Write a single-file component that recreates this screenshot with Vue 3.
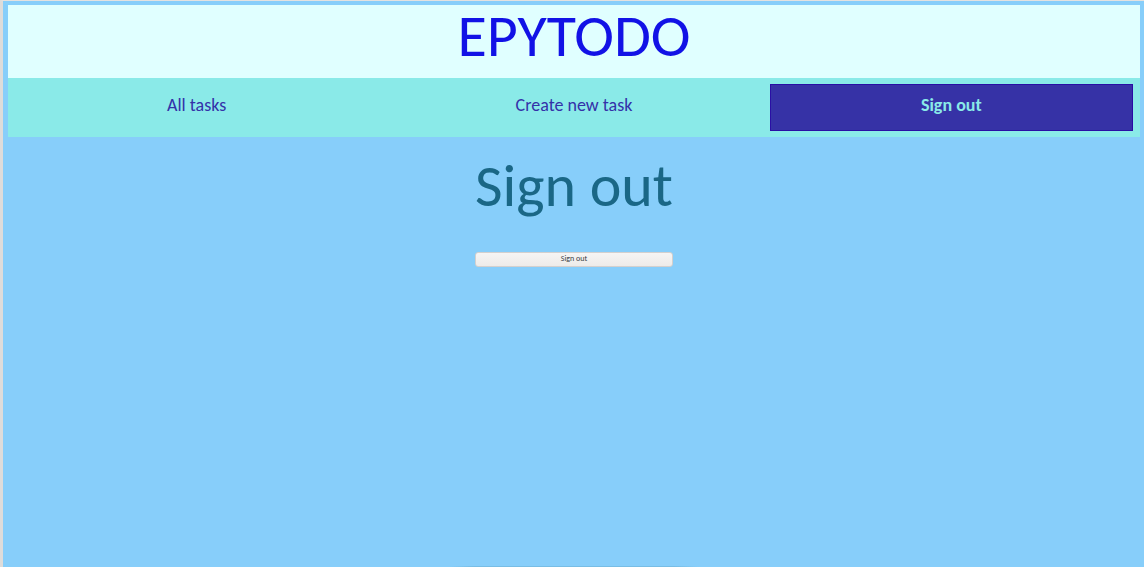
<script setup>
const links = [
  { label: 'All tasks', active: false },
  { label: 'Create new task', active: false },
  { label: 'Sign out', active: true },
]
</script>

<template>
  <div class="page">
    <header class="banner"><h1>EPYTODO</h1></header>
    <nav class="menu">
      <a v-for="link in links" :key="link.label" href="#" :class="{ active: link.active }">{{ link.label }}</a>
    </nav>
    <main class="content">
      <h2>Sign out</h2>
      <button type="button">Sign out</button>
    </main>
    <div class="shade"></div>
  </div>
</template>

<style>
body {
  background: #87cefa;
}
</style>

<style scoped>
.page {
  position: relative;
  box-sizing: border-box;
  min-height: 100vh;
  padding: 4px 4px 0 5px;
  border-top: 1px solid #e4e2e0;
  border-left: 3px solid #dedcda;
  background: #87cefa;
  font-family: Carlito, Calibri, Lato, "Liberation Sans", sans-serif;
  text-align: center;
}
.banner {
  height: 73px;
  background: #e0ffff;
}
h1,
h2 {
  margin: 0;
  font-size: 60px;
  line-height: 62px;
  font-weight: 400;
}
h1 {
  color: #1212e6;
}
.menu {
  display: grid;
  grid-template-columns: repeat(3, 1fr);
  gap: 14px;
  padding: 6px 7px;
  background: #8aeae8;
}
.menu a {
  border: 1px solid transparent;
  color: #3431a8;
  font-size: 18px;
  line-height: 41px;
  padding-bottom: 4px;
  text-decoration: none;
}
.menu a.active {
  border-color: #2a0fa4;
  background: #3632a6;
  color: #8aeae8;
  font-weight: 700;
}
.content {
  display: flex;
  flex-direction: column;
  align-items: center;
  padding-top: 18px;
}
h2 {
  color: #1a6786;
}
button {
  width: 198px;
  height: 15px;
  margin-top: 35px;
  padding: 0 0 2px;
  border: 1px solid #d3d0ce;
  border-radius: 3px;
  background: linear-gradient(#f6f5f4, #edebe9);
  color: #3c4144;
  font-family: inherit;
  font-size: 8px;
  line-height: 11px;
}
.shade {
  position: absolute;
  bottom: 0;
  left: 50%;
  width: 250px;
  height: 1px;
  transform: translateX(-50%);
  background: linear-gradient(90deg, transparent, #78bde5 10%, #78bde5 90%, transparent);
}
</style>
